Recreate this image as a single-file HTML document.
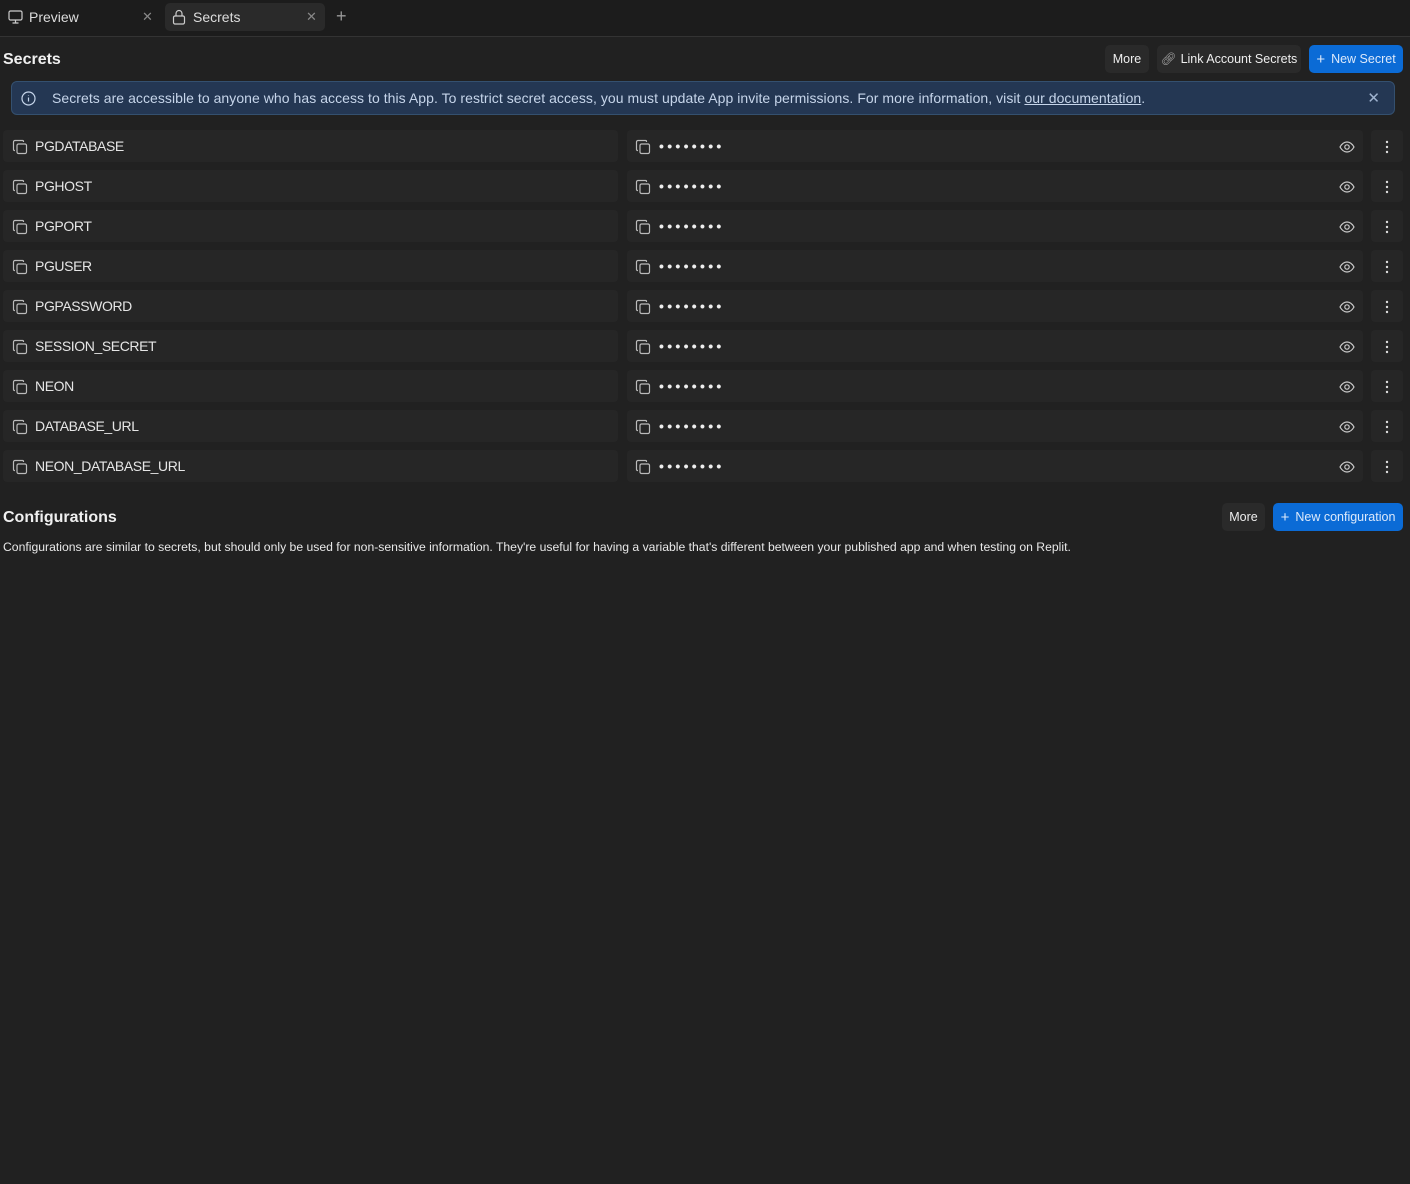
<!DOCTYPE html>
<html><head><meta charset="utf-8"><style>
*{box-sizing:border-box;margin:0;padding:0}
body{width:1410px;height:1184px;background:#212121;font-family:"Liberation Sans",sans-serif;color:#e6e6e6;position:relative;overflow:hidden}
.tabs{position:absolute;left:0;top:0;width:1410px;height:37px;border-bottom:1px solid #333;background:#1c1c1c}
.tab{position:absolute;top:3px;height:28px;border-radius:5px;font-size:14px;display:flex;align-items:center}
.x{position:absolute;color:#888;font-size:13px;top:6px}
h2{position:absolute;font-size:16px;font-weight:bold;color:#f0f0f0}
.btn{position:absolute;height:28px;border-radius:5px;font-size:12.5px;display:flex;align-items:center;justify-content:center;background:#2a2a2a;color:#eee}
.blue{background:#0b6bd6;color:#dce9fb}
.banner{position:absolute;left:11px;top:81px;width:1384px;height:34px;background:#243753;border:1px solid #34506f;border-radius:6px;font-size:14px;color:#c6d5ea;display:flex;align-items:center;padding-left:40px;letter-spacing:0.05px}
.cell{position:absolute;height:32px;background:#262626;border-radius:4px;display:flex;align-items:center;font-size:14px}
.nm{letter-spacing:-0.4px}
.dots{letter-spacing:3.3px;font-size:14px;font-weight:bold;color:#eee;margin-left:8px}
</style></head><body>
<div class="tabs">
 <div class="tab" style="left:3px;width:155px;">
  <svg style="position:absolute;left:5px;top:7px" width="15" height="14" viewBox="0 0 15 14" fill="none" stroke="#ccc" stroke-width="1.2"><rect x="1" y="1" width="13" height="9" rx="1.5"/><path d="M7.5 10v3M4.5 13h6"/></svg>
  <span style="position:absolute;left:26px;color:#ddd">Preview</span>
  <span class="x" style="left:139px">✕</span>
 </div>
 <div class="tab" style="left:165px;width:160px;background:#2a2a2a">
  <svg style="position:absolute;left:7px;top:6px" width="14" height="16" viewBox="0 0 14 16" fill="none" stroke="#ccc" stroke-width="1.2"><rect x="1.5" y="7" width="11" height="8" rx="1.5"/><path d="M4 7V4.5a3 3 0 0 1 6 0V7"/></svg>
  <span style="position:absolute;left:28px;color:#ddd">Secrets</span>
  <span class="x" style="left:141px">✕</span>
 </div>
 <span style="position:absolute;left:336px;top:6px;color:#999;font-size:18px">+</span>
</div>

<h2 style="left:3px;top:51px">Secrets</h2>
<div class="btn" style="left:1105px;top:45px;width:44px">More</div>
<div class="btn" style="left:1157px;top:45px;width:144px"><span style="color:#aaa;margin-right:4px">🔗︎</span>Link Account Secrets</div>
<div class="btn blue" style="left:1309px;top:45px;width:94px"><span style="margin-right:6px;font-size:15px">+</span>New Secret</div>

<div class="banner">
 <svg style="position:absolute;left:9px;top:9px" width="15" height="15" viewBox="0 0 15 15" fill="none" stroke="#c6d5ea" stroke-width="1.2"><circle cx="7.5" cy="7.5" r="6.5"/><path d="M7.5 6.5v4M7.5 4.2v.6"/></svg>
 Secrets are accessible to anyone who has access to this App. To restrict secret access, you must update App invite permissions. For more information, visit&nbsp;<u>our documentation</u>.
 <span style="position:absolute;right:14px;top:7px;color:#9fb3cf;font-size:15px">✕</span>
</div>

<div id="rows"></div>
<script>
var names=["PGDATABASE","PGHOST","PGPORT","PGUSER","PGPASSWORD","SESSION_SECRET","NEON","DATABASE_URL","NEON_DATABASE_URL"];
var copy='<svg width="16" height="16" viewBox="0 0 16 16" fill="none" stroke="#bbb" stroke-width="1.2"><path d="M3 11.5H2.5a1 1 0 0 1-1-1V3a1.5 1.5 0 0 1 1.5-1.5h7.5a1 1 0 0 1 1 1V3"/><rect x="5" y="5" width="9.5" height="9.5" rx="1.5"/></svg>';
var h='';
names.forEach(function(n,i){var y=130+i*40;
h+='<div class="cell" style="left:3px;top:'+y+'px;width:615px"><span style="margin-left:9px;display:flex;margin-top:2px">'+copy+'</span><span class="nm" style="margin-left:7px">'+n+'</span></div>';
h+='<div class="cell" style="left:627px;top:'+y+'px;width:736px"><span style="margin-left:8px;display:flex;margin-top:2px">'+copy+'</span><span class="dots">••••••••</span>'+
'<svg style="position:absolute;right:8px;top:11px" width="16" height="12" viewBox="0 0 16 12" fill="none" stroke="#ccc" stroke-width="1.2"><path d="M1 6c2-3.5 4.5-5 7-5s5 1.5 7 5c-2 3.5-4.5 5-7 5S3 9.5 1 6z"/><circle cx="8" cy="6" r="2.2"/></svg></div>';
h+='<div class="cell" style="left:1371px;top:'+y+'px;width:32px;justify-content:center"><svg width="4" height="14" viewBox="0 0 4 14" fill="#ddd" style="margin-top:2px"><circle cx="2" cy="2" r="1.2"/><circle cx="2" cy="7" r="1.2"/><circle cx="2" cy="12" r="1.2"/></svg></div>';
});
document.getElementById('rows').innerHTML=h;
</script>

<h2 style="left:3px;top:509px">Configurations</h2>
<div class="btn" style="left:1222px;top:503px;width:43px">More</div>
<div class="btn blue" style="left:1273px;top:503px;width:130px"><span style="margin-right:6px;font-size:15px">+</span>New configuration</div>
<div style="position:absolute;left:3px;top:540px;font-size:12.2px;color:#e8e8e8">Configurations are similar to secrets, but should only be used for non-sensitive information. They're useful for having a variable that's different between your published app and when testing on Replit.</div>
</body></html>
